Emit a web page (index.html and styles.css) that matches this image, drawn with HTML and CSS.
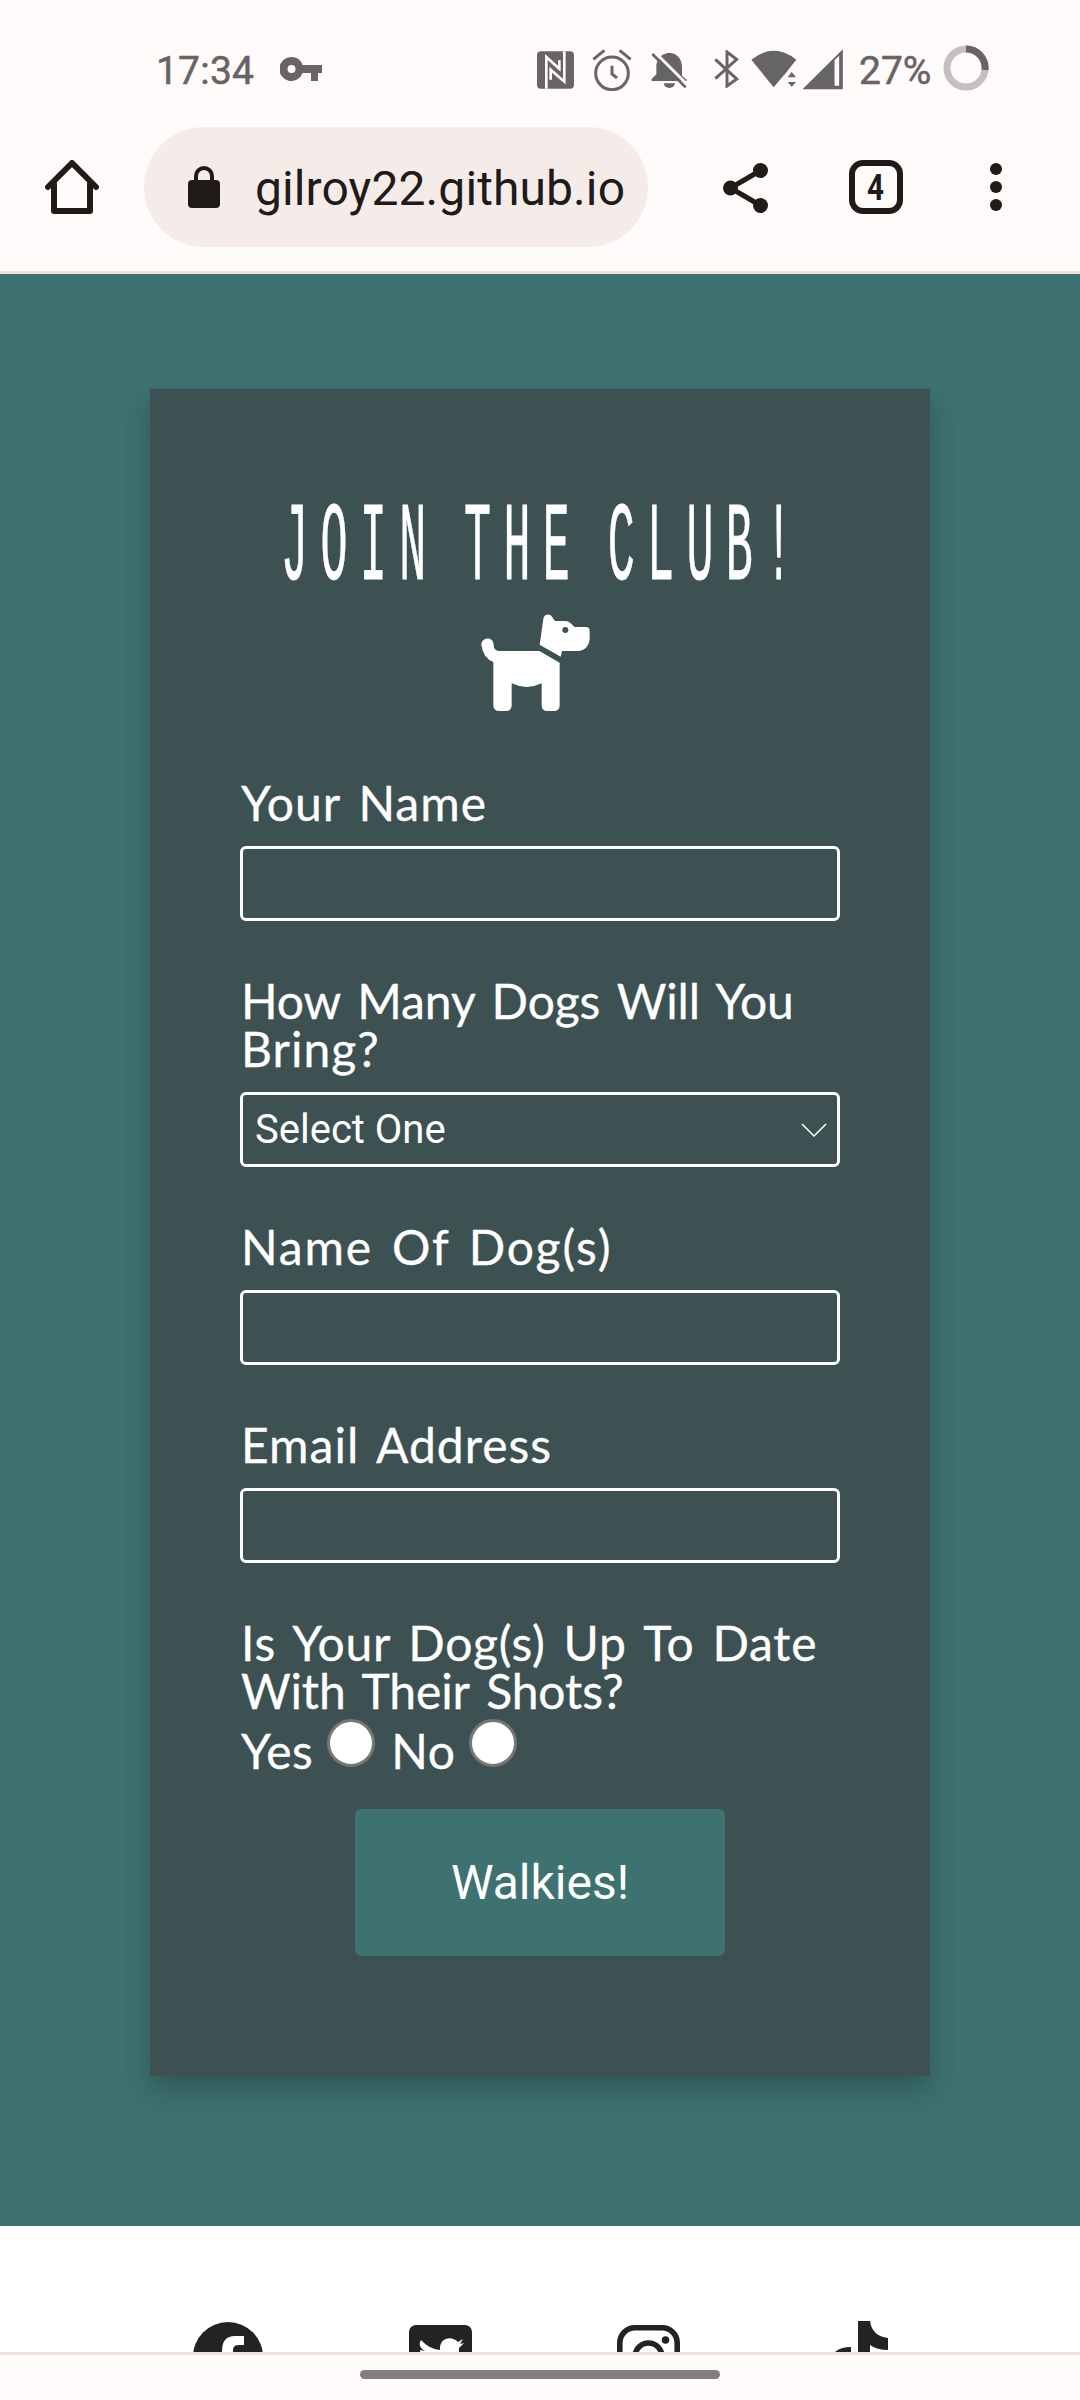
FILE: index.html
```html
<!DOCTYPE html>
<html lang="en">
<head>
<meta charset="utf-8">
<title>Join The Club!</title>
<link rel="stylesheet" href="styles.css">
</head>
<body>
<div class="status">
  <span class="time">17:34</span>
  <svg class="key" width="42" height="24" viewBox="0 0 42 24"><path fill-rule="evenodd" d="M11.5 0A12 12 0 0 1 22.6 8H42v8h-4v8h-7v-8h-8.4A12 12 0 1 1 11.500 0zm0 8a4 4 0 1 0 0 8 4 4 0 0 0 0-8z"/></svg>
  <svg class="nfc" width="37" height="38" viewBox="21 33 111 112"><rect x="21" y="33" width="111" height="112" rx="12"/><path class="cutline" d="M49 145V50L88 85V60M103 33V124L62 88V118"/></svg>
  <svg class="alarm" width="40" height="42" viewBox="187 25 120 126"><g class="line"><circle cx="247" cy="98" r="49"/><path d="M247 75V100L262 112M191 56L224 29M303 56L270 29"/></g></svg>
  <svg class="bell" width="37" height="37" viewBox="364 35 111 111"><path d="M395 46C400 42 408 38 419 37C443 38 457 58 457 78V106L471 118V122H366V116L380 102V78C380 70 382 64 385 60ZM402 129H436C435 138 428 143 419 143S403 138 402 129Z"/><path class="slashcut" d="M374 34L474 134"/><path class="slash" d="M368 41L468 141"/></svg>
  <svg class="bt" width="25" height="38" viewBox="552 31 75 114"><path class="line" d="M556 59L620 118L591 139V37L620 59L556 117"/></svg>
  <svg class="wifi" width="46" height="38" viewBox="665 30 138 114"><path d="M666 59Q733 6 801 59L781 84L768 101L764 105L733 142ZM775 112L787 96 800 112ZM775 126L787 140 800 126Z"/></svg>
  <svg class="signal" width="41" height="41" viewBox="817 28 122 123"><path fill-rule="evenodd" d="M818 149L939 29V149ZM914 62V138H928V48Z"/></svg>
  <span class="pct">27%</span>
  <svg class="ring" width="46" height="46" viewBox="0 0 46 46"><circle cx="23" cy="23" r="19"/><path d="M23 4A19 19 0 0 1 42 25"/></svg>
</div>
<div class="toolbar">
  <svg class="home" width="54" height="54" viewBox="0 0 54 54"><path d="M9 24V51H45V24M3 27L27 3L51 27"/></svg>
  <div class="pill">
    <svg class="lock" width="32" height="42" viewBox="0 0 32 42"><rect y="14" width="32" height="28" rx="4"/><path d="M8 16V10A8 8 0 0 1 24 10V16"/></svg>
    <span class="url">gilroy22.github.io</span>
  </div>
  <svg class="share" width="45" height="50" viewBox="0 0 45 50"><path d="M37.500 7.500L7.500 25L37.500 42.500"/><circle cx="37.500" cy="7.500" r="7.500"/><circle cx="7.500" cy="25" r="7.500"/><circle cx="37.500" cy="42.500" r="7.500"/></svg>
  <div class="tabs"><span>4</span></div>
  <svg class="more" width="12" height="48" viewBox="0 0 12 48"><circle cx="6" cy="6" r="6"/><circle cx="6" cy="24" r="6"/><circle cx="6" cy="42" r="6"/></svg>
</div>
<main class="section">
  <form class="card">
    <h1><span>JOIN THE CLUB!</span></h1>
    <svg class="dog" width="150" height="125" viewBox="0 0 450 375"><path d="M64 135C64 110 101 108 101 135Q101 153 120 153H238L299 188V315Q299 333 281 333H262Q245 333 245 315V250Q200 272 155 250V315Q155 333 138 333H118Q100 333 100 315V186Q70 175 64 135Z"/><path fill-rule="evenodd" d="M239 134L250 57C252 42 270 40 276 50L285 63H317Q325 63 330 68L344 81H378Q389 81 389 93V116Q385 153 350 153H306L302 170ZM316 81A9 9 0 1 0 316 99A9 9 0 0 0 316 81Z"/></svg>
    <label class="field"><span class="label">Your Name</span><input class="box" type="text"></label>
    <label class="field"><span class="label"><span class="snug">How Many Dogs Will You</span><br>Bring?</span><span class="box select">Select One<svg width="26" height="14" viewBox="0 0 26 14"><path d="M1 1L13 13L25 1"/></svg></span></label>
    <label class="field"><span class="label"><span class="wide">Name Of Dog(s)</span></span><input class="box" type="text"></label>
    <label class="field"><span class="label">Email Address</span><input class="box" type="text"></label>
    <div class="label"><span class="near">Is Your Dog(s) Up To Date</span><br><span class="snug">With Their Shots?</span></div>
    <div class="choices"><span class="label">Yes</span><i class="radio"></i><span class="label">No</span><i class="radio"></i></div>
    <button class="submit" type="button">Walkies!</button>
  </form>
</main>
<footer class="social">
  <svg width="70" height="70" viewBox="0 0 70 70"><circle cx="35" cy="35" r="35"/><path class="knock" d="M30 70V36H29V29Q29 14 42 14H51V23H46Q40 23 40 28V70Z"/></svg>
  <svg class="twitter" width="63" height="63" viewBox="0 0 63 63"><rect width="63" height="63" rx="7"/><path class="knock" d="M12 15Q20 24 31 25C30 13 42 10 49 17L54 14 51 19 55 18 50 23Q50 46 27 48Q18 49 10 44Q18 45 23 41Q15 38 14 34L19 34Q11 30 11 25L16 26Q8 21 12 15Z"/></svg>
  <svg class="insta" width="63" height="63" viewBox="0 0 63 63"><rect x="2.800" y="2.800" width="57.400" height="57.400" rx="15"/><circle cx="31.500" cy="31.500" r="13.500"/><circle class="dot" cx="48.500" cy="15" r="3.800"/></svg>
  <svg class="tiktok" width="62" height="70" viewBox="0 0 62 70"><path d="M29 0H41Q43 15 59 17V29Q48 29 41 24V48C41 76 0 76 0 48Q0 26 22 26V38Q12 38 12 48C13 62 29 61 29 48Z"/></svg>
</footer>
<div class="nav"><div class="handle"></div></div>
</body>
</html>
```
FILE: styles.css
```css
* { box-sizing: border-box; }
body { margin: 0; width: 1080px; height: 2400px; overflow: hidden; display: flex; flex-direction: column; background: #fff; font-family: Roboto, sans-serif; }
svg { display: block; flex: none; }

.status { height: 127px; padding: 49px 0 0 156px; display: flex; align-items: flex-start; color: #666464; fill: #666464; background: #fffbfa; font-size: 39px; line-height: 44px; }
.status .line { fill: none; stroke: #666464; stroke-width: 9; }
.time, .pct { -webkit-text-stroke: 0.5px #666464; }
.time { width: 98px; flex: none; letter-spacing: 0.2px; }
.key { margin: 8px 0 0 26px; }
.nfc { margin: 2px 0 0 215px; }
.cutline { fill: none; stroke: #fffbfa; stroke-width: 8; }
.alarm { margin-left: 18px; }
.bell { margin: 3px 0 0 19px; }
.slashcut { stroke: #fffbfa; stroke-width: 9; }
.slash { stroke: #666464; stroke-width: 8; }
.bt { margin: 1px 0 0 26px; }
.wifi { margin: 1px 0 0 12px; }
.signal { margin: 0 0 0 5px; }
.pct { margin-left: 16px; width: 72px; flex: none; white-space: nowrap; }
.ring { margin: -4px 0 0 12px; fill: none; stroke: #c4c0c0; stroke-width: 7; }
.ring path { stroke: #666464; }

.toolbar { height: 147px; padding-left: 45px; display: flex; align-items: flex-start; background: #fffbfa; border-bottom: 3px solid #f3dfdc; fill: #201a19; color: #201a19; }
.home { margin-top: 33px; fill: none; stroke: #201a19; stroke-width: 6; stroke-linejoin: round; stroke-linecap: round; }
.pill { width: 504px; height: 120px; margin-left: 45px; padding-left: 44px; border-radius: 60px; background: #f5ecea; display: flex; align-items: center; }
.lock path { fill: none; stroke: #201a19; stroke-width: 4; }
.url { margin-left: 35px; font-size: 48px; line-height: 60px; padding-top: 4px; letter-spacing: 0.1px; }
.share { margin: 36px 0 0 75px; }
.share path { fill: none; stroke: #201a19; stroke-width: 5; }
.tabs { width: 54px; height: 54px; margin: 33px 0 0 81px; border: 6px solid #201a19; border-radius: 14px; display: flex; align-items: center; justify-content: center; font-size: 37px; font-weight: 700; line-height: 42px; padding-top: 2px; }
.tabs span { transform: scaleX(.8); }
.more { margin: 36px 0 0 87px; }

.section { height: 1952px; flex: none; padding: 115px 150px 0; background: #3d7271; }
.card { width: 780px; height: 1687px; padding: 93px 90px 0; background: #3d5152; color: #fff; box-shadow: 0 12px 24px rgba(0, 0, 0, .2), 0 18px 36px rgba(0, 0, 0, .05); display: flex; flex-direction: column; align-items: flex-start; }
h1 { width: 600px; height: 118px; margin: 0; padding: 9px 0 0 41px; font: 400 45px/47px "Liberation Mono", monospace; white-space: nowrap; text-rendering: geometricPrecision; }
h1 span { display: block; width: 540px; transform: scaleY(2.5); transform-origin: 0 0; letter-spacing: 12.4px; word-spacing: -14px; -webkit-text-stroke: 0.3px #fff; }
.dog { margin: 0 0 52px 220px; fill: #fff; }
.field { width: 600px; display: flex; flex-direction: column; margin-bottom: 54px; }
.label { display: block; padding: 2px 0 0 1px; font: 400 48px/48px Lato, sans-serif; letter-spacing: 1px; word-spacing: 5px; white-space: nowrap; -webkit-text-stroke: 0.3px #fff; }
.snug { letter-spacing: -0.1px; }
.near { letter-spacing: 0.75px; }
.wide { letter-spacing: 1.8px; }
.field .label { margin-bottom: 19px; }
.box { width: 600px; height: 75px; border: 3px solid #fff; border-radius: 6px; background: transparent; padding: 0 10px 0 12px; outline: 0; }
.select { display: flex; align-items: center; justify-content: space-between; font-size: 40px; }
.select svg { fill: none; stroke: #fff; stroke-width: 1.500; }
.choices { height: 48px; margin-top: 4px; display: flex; align-items: flex-start; }
.choices .label { padding-top: 8px; letter-spacing: 0.5px; }
.radio { width: 48px; height: 48px; border: 3px solid #767676; border-radius: 50%; background: #fff; margin: 0 15px 0 14px; flex: none; }
.submit { align-self: center; width: 370px; height: 147px; flex: none; margin: 42px 0 0; border: 0; border-radius: 6px; background: #3d7271; color: #fff; font: 400 48px/60px Roboto, sans-serif; padding: 0; }

.social { height: 126px; flex: none; padding: 96px 0 0 193px; overflow: hidden; display: flex; align-items: flex-start; fill: #232323; }
.knock { fill: #fff; }
.twitter { margin: 3px 0 0 146px; }
.insta { margin: 3px 0 0 145px; fill: none; stroke: #232323; stroke-width: 5.600; }
.insta .dot { fill: #232323; stroke: none; }
.tiktok { margin: -1px 0 0 149px; }
.nav { height: 48px; flex: none; border-top: 3px solid #f3dfdc; background: #fffbfa; padding-top: 15px; }
.handle { width: 360px; height: 9px; margin: 0 auto; border-radius: 5px; background: #817e7e; }
```
